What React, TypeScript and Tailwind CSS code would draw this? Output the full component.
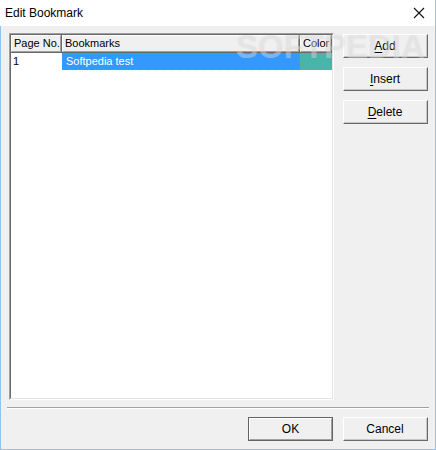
const ui = { fontFamily: '"Liberation Sans", Arial, sans-serif' }

function WinButton({ label, u, isDefault }: { label: string; u?: number; isDefault?: boolean }) {
  const text =
    u === undefined ? (
      label
    ) : (
      <>
        {label.slice(0, u)}
        <span className="underline underline-offset-2">{label[u]}</span>
        {label.slice(u + 1)}
      </>
    )
  return (
    <div
      className={`w-[85px] h-[24px] shrink-0 ${isDefault ? 'border border-[#646464]' : 'border-t border-l border-white border-b border-r border-b-[#696969] border-r-[#696969]'}`}
    >
      <div
        className={`w-full h-full flex items-center justify-center text-[12px] text-black bg-[#f0f0f0] ${isDefault ? 'border-t border-l border-white border-b border-r border-b-[#a0a0a0] border-r-[#a0a0a0]' : 'border-b border-r border-[#c8c8c8] border-t-0 border-l-0'}`}
      >
        {text}
      </div>
    </div>
  )
}

function HeaderCell({ label, width }: { label: string; width: string }) {
  return (
    <div className={`${width} h-[18px] shrink-0 border-b border-r border-[#696969]`}>
      <div className="h-full overflow-hidden whitespace-nowrap border-t border-l border-white border-b border-r border-b-[#a0a0a0] border-r-[#a0a0a0] bg-[#f0f0f0] pl-[2px] text-[11px] leading-[15px] text-black">
        {label}
      </div>
    </div>
  )
}

export default function App() {
  return (
    <div className="w-[436px] h-[450px] flex flex-col bg-white relative overflow-hidden" style={ui}>
      {/* title bar */}
      <div className="h-[26px] flex items-center justify-between bg-white border-r border-[#8cc4f4] pl-[5px] pr-[10px]">
        <span className="text-[12px] text-black">Edit Bookmark</span>
        <svg width="12" height="12" viewBox="0 0 12 12">
          <path d="M1 1 L11 11 M11 1 L1 11" stroke="#111" strokeWidth="1.1" />
        </svg>
      </div>

      <div className="flex-1 flex flex-col bg-[#f0f0f0] border-l border-r border-b border-[#8cc4f4]">
        <div className="flex pt-[7px] pl-[8px]">
          {/* list view */}
          <div className="w-[325px] h-[367px] border-t border-l border-[#a0a0a0] border-b border-r border-b-white border-r-white">
            <div className="w-full h-full bg-white border-t border-l border-[#696969] border-b border-r border-b-[#e3e3e3] border-r-[#e3e3e3] flex flex-col">
              <div className="flex">
                <HeaderCell label="Page No." width="w-[51px]" />
                <HeaderCell label="Bookmarks" width="w-[238px]" />
                <HeaderCell label="Color" width="w-[32px]" />
              </div>
              <div className="flex h-[17px] text-[11px] leading-[15px] whitespace-nowrap">
                <div className="w-[51px] shrink-0 pl-[2px] pt-[1px] text-black">1</div>
                <div className="w-[238px] shrink-0 bg-[#3399ff] text-white pl-[3px] border border-dotted border-[#c8783c]">
                  Softpedia test
                </div>
                <div className="w-[32px] shrink-0 bg-[#48b5aa]" />
              </div>
            </div>
          </div>

          {/* side buttons */}
          <div className="flex flex-col gap-[9px] pl-[9px] pt-[1px]">
            <WinButton label="Add" u={0} />
            <WinButton label="Insert" u={0} />
            <WinButton label="Delete" u={0} />
          </div>
        </div>

        <div className="mx-[6px] mt-[7px] h-[2px] border-t border-[#a0a0a0] border-b border-b-white" />

        <div className="flex justify-end gap-[10px] pr-[7px] pt-[8px]">
          <WinButton label="OK" isDefault />
          <WinButton label="Cancel" />
        </div>
      </div>

      {/* watermark */}
      <div className="absolute left-[236px] top-[30px] text-[33px] leading-[33px] font-bold text-white/30 pointer-events-none select-none [text-shadow:0_0_1px_rgba(150,150,150,0.25)]">
        SOFTPEDIA
      </div>
    </div>
  )
}
